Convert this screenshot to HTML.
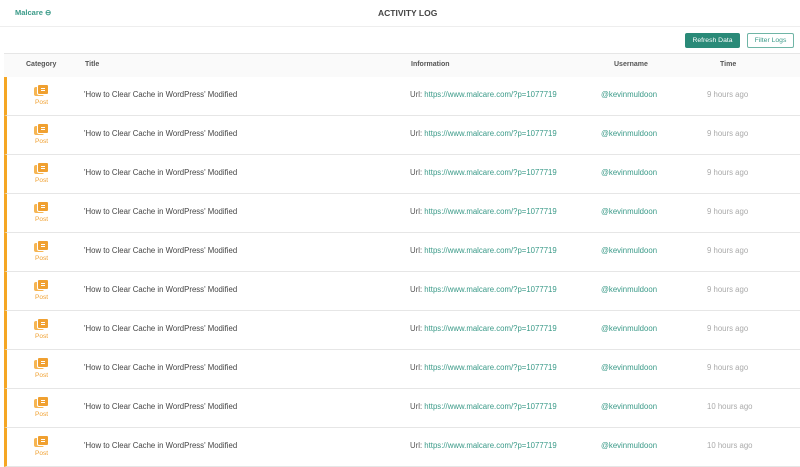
<!DOCTYPE html><html><head><style>
body{margin:0;width:800px;height:467px;overflow:hidden;background:#fff;font-family:"Liberation Sans",sans-serif;position:relative}
.a{position:absolute;white-space:nowrap}
.row{position:absolute;left:4px;right:0;height:38px;border-bottom:1px solid #e6e6e6;border-left:3px solid #f5a623;background:#fff}
.ic{position:absolute;left:30px;top:7px;width:10px;height:9px;background:#f0a030;border-radius:2px;border:1px solid #fff}
.ic2{position:absolute;left:27px;top:10px;width:10px;height:9px;background:#f6b552;border-radius:2px}
.ic:after{content:"";position:absolute;left:3px;top:3px;width:4px;height:1px;background:#fff;box-shadow:0 2px 0 #fff}
.post{position:absolute;left:28px;top:22px;font-size:6.5px;color:#f0a030}
.t{position:absolute;left:77px;top:13px;font-size:7.8px;color:#444}
.u{position:absolute;left:403px;top:13px;font-size:7.8px;color:#555}
.u span{color:#3a9a88}
.n{position:absolute;left:594px;top:13px;font-size:7.8px;color:#3a9a88}
.tm{position:absolute;left:700px;top:13px;font-size:7.8px;color:#aaa}
.h{position:absolute;top:61px;font-size:7px;font-weight:bold;color:#555}
.b{position:absolute;display:flex;align-items:center;justify-content:center;font-size:6.8px;border-radius:2px}
</style></head><body>
<div class="a" style="left:15px;top:8px;font-size:7.5px;font-weight:bold;color:#3a9a88">Malcare ⊖</div>
<div class="a" style="left:378px;top:8px;font-size:8.5px;font-weight:bold;color:#444">ACTIVITY LOG</div>
<div class="a" style="left:0;right:0;top:26px;border-top:1px solid #eee"></div>
<div class="b" style="left:685px;top:33px;width:55px;height:15px;background:#2a8a78;color:#fff">Refresh Data</div>
<div class="b" style="left:747px;top:33px;width:45px;height:13px;border:1px solid #6fb5a6;color:#3a9a88">Filter Logs</div>
<div class="a" style="left:4px;right:0;top:53px;height:23px;background:#fafafa;border-top:1px solid #e6e6e6;border-bottom:1px solid #e6e6e6"></div>
<div class="h" style="left:26px">Category</div><div class="h" style="left:85px">Title</div><div class="h" style="left:411px">Information</div><div class="h" style="left:614px">Username</div><div class="h" style="left:720px">Time</div>
<div class="row" style="top:77px"><div class="ic2"></div><div class="ic"></div><div class="post">Post</div><div class="t">'How to Clear Cache in WordPress' Modified</div><div class="u">Url: <span>https://www.malcare.com/?p=1077719</span></div><div class="n">@kevinmuldoon</div><div class="tm">9 hours ago</div></div>
<div class="row" style="top:116px"><div class="ic2"></div><div class="ic"></div><div class="post">Post</div><div class="t">'How to Clear Cache in WordPress' Modified</div><div class="u">Url: <span>https://www.malcare.com/?p=1077719</span></div><div class="n">@kevinmuldoon</div><div class="tm">9 hours ago</div></div>
<div class="row" style="top:155px"><div class="ic2"></div><div class="ic"></div><div class="post">Post</div><div class="t">'How to Clear Cache in WordPress' Modified</div><div class="u">Url: <span>https://www.malcare.com/?p=1077719</span></div><div class="n">@kevinmuldoon</div><div class="tm">9 hours ago</div></div>
<div class="row" style="top:194px"><div class="ic2"></div><div class="ic"></div><div class="post">Post</div><div class="t">'How to Clear Cache in WordPress' Modified</div><div class="u">Url: <span>https://www.malcare.com/?p=1077719</span></div><div class="n">@kevinmuldoon</div><div class="tm">9 hours ago</div></div>
<div class="row" style="top:233px"><div class="ic2"></div><div class="ic"></div><div class="post">Post</div><div class="t">'How to Clear Cache in WordPress' Modified</div><div class="u">Url: <span>https://www.malcare.com/?p=1077719</span></div><div class="n">@kevinmuldoon</div><div class="tm">9 hours ago</div></div>
<div class="row" style="top:272px"><div class="ic2"></div><div class="ic"></div><div class="post">Post</div><div class="t">'How to Clear Cache in WordPress' Modified</div><div class="u">Url: <span>https://www.malcare.com/?p=1077719</span></div><div class="n">@kevinmuldoon</div><div class="tm">9 hours ago</div></div>
<div class="row" style="top:311px"><div class="ic2"></div><div class="ic"></div><div class="post">Post</div><div class="t">'How to Clear Cache in WordPress' Modified</div><div class="u">Url: <span>https://www.malcare.com/?p=1077719</span></div><div class="n">@kevinmuldoon</div><div class="tm">9 hours ago</div></div>
<div class="row" style="top:350px"><div class="ic2"></div><div class="ic"></div><div class="post">Post</div><div class="t">'How to Clear Cache in WordPress' Modified</div><div class="u">Url: <span>https://www.malcare.com/?p=1077719</span></div><div class="n">@kevinmuldoon</div><div class="tm">9 hours ago</div></div>
<div class="row" style="top:389px"><div class="ic2"></div><div class="ic"></div><div class="post">Post</div><div class="t">'How to Clear Cache in WordPress' Modified</div><div class="u">Url: <span>https://www.malcare.com/?p=1077719</span></div><div class="n">@kevinmuldoon</div><div class="tm">10 hours ago</div></div>
<div class="row" style="top:428px"><div class="ic2"></div><div class="ic"></div><div class="post">Post</div><div class="t">'How to Clear Cache in WordPress' Modified</div><div class="u">Url: <span>https://www.malcare.com/?p=1077719</span></div><div class="n">@kevinmuldoon</div><div class="tm">10 hours ago</div></div>
</body></html>
